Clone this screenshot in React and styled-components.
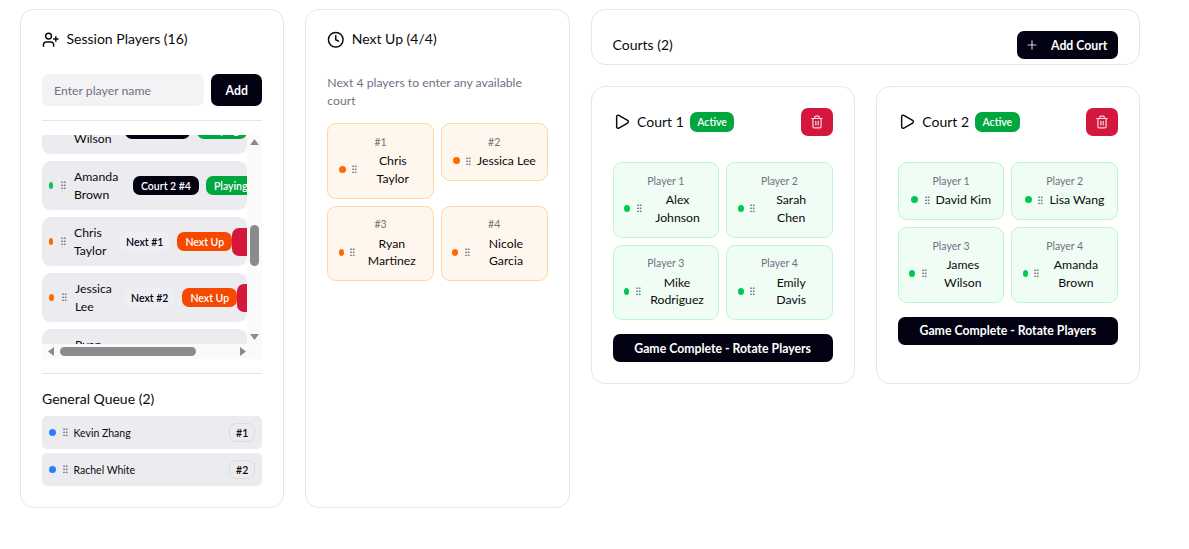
import React, { useLayoutEffect, useRef } from "react";
import styled, { createGlobalStyle } from "styled-components";
import { Clock, GripVertical, Play, Plus, Trash2, UserPlus, X } from "lucide-react";

const GlobalStyle = createGlobalStyle`
  html, body { margin: 0; padding: 0; background: #fff; }
  body {
    font-family: Lato, "Liberation Sans", sans-serif;
    font-size: 14px;
    color: #0a0a0a;
  }
  * { box-sizing: border-box; }
`;

const Page = styled.div`
  display: grid;
  grid-template-columns: repeat(4, minmax(0, 1fr));
  column-gap: 21px;
  width: 1120px;
  margin: 9px 0 0 20px;
`;

const Panel = styled.section`
  display: flex;
  flex-direction: column;
  min-width: 0;
  background: #fff;
  border: 1px solid #e6e6e6;
  border-radius: 14px;
  padding: 21px;
`;

const PanelTitle = styled.h2`
  display: flex;
  align-items: center;
  gap: 7px;
  height: 17.5px;
  margin: 0;
  font-size: 14px;
  font-weight: 400;
  line-height: 17.5px;
  svg { flex-shrink: 0; }
`;

const TitleText = styled.span`
  margin-bottom: 2px;
`;

const AddForm = styled.form`
  display: flex;
  gap: 7px;
  margin-top: 25.5px;
`;

const NameInput = styled.input`
  flex: 1;
  min-width: 0;
  height: 32px;
  padding: 0 12px;
  border: 0;
  border-radius: 7px;
  background: #f3f3f5;
  font: inherit;
  font-size: 12.25px;
  &::placeholder { color: #717182; opacity: 1; }
`;

const DarkButton = styled.button`
  display: flex;
  align-items: center;
  justify-content: center;
  border: 0;
  border-radius: 7px;
  background: #030213;
  color: #fff;
  font: inherit;
  font-size: 12.25px;
  font-weight: 700;
`;

const AddButton = styled(DarkButton)`
  width: 51px;
  height: 32px;
`;

const Separator = styled.hr`
  flex: 0 0 1px;
  width: 100%;
  height: 1px;
  margin: ${(p) => p.$margin};
  border: 0;
  background: #e5e5e5;
`;

const ListFrame = styled.div`
  display: grid;
  grid-template-columns: minmax(0, 1fr) 15px;
  grid-template-rows: 209px 15px;
  background: #fafafa;
`;

const PlayerList = styled.div`
  display: flex;
  flex-direction: column;
  gap: 7px;
  overflow: hidden;
  background: #fff;
`;

const VerticalBar = styled.div`
  display: flex;
  flex-direction: column;
`;

const HorizontalBar = styled.div`
  display: flex;
`;

const BarButton = styled.span`
  display: flex;
  flex: 0 0 ${(p) => p.$size}px;
  align-items: center;
  justify-content: ${(p) => p.$justify || "center"};
`;

const BarTrack = styled.div`
  display: flex;
  flex: 1;
  flex-direction: ${(p) => (p.$vertical ? "column" : "row")};
  align-items: center;
`;

const VerticalThumb = styled.div`
  width: 9px;
  height: 41px;
  margin-top: 75px;
  border-radius: 5px;
  background: #8b8b8b;
`;

const HorizontalThumb = styled.div`
  width: 136px;
  height: 9px;
  border-radius: 5px;
  background: #8b8b8b;
`;

const PlayerRow = styled.div`
  display: flex;
  flex: 0 0 49px;
  align-items: center;
  gap: 3.5px;
  width: 100%;
  height: 49px;
  padding: 7px;
  border-radius: 8.75px;
  background: #ececf0;
`;

const Dot = styled.span`
  flex: 0 0 ${(p) => p.$width || 7}px;
  height: 7px;
  border-radius: 50%;
  background: ${(p) => p.$color};
`;

const Grip = styled.span`
  display: flex;
  flex: 0 0 ${(p) => p.$box || 10.5}px;
  justify-content: center;
  color: #717182;
`;

const RowName = styled.span`
  flex: 0 0 ${(p) => p.$width}px;
  font-size: 12.25px;
  line-height: 17.5px;
  white-space: pre-line;
`;

const Badges = styled.div`
  display: flex;
  flex: 0 0 auto;
  align-items: center;
  gap: 7px;
`;

const Badge = styled.span`
  display: inline-flex;
  align-items: center;
  justify-content: center;
  flex: 0 0 auto;
  height: 19px;
  padding: 0 ${(p) => p.$pad || 8}px;
  border-radius: 7px;
  background: ${(p) => p.$bg};
  color: ${(p) => p.$color || "#fff"};
  font-size: 10.5px;
  font-weight: 600;
  line-height: 14px;
  white-space: nowrap;
`;

const RemoveButton = styled.button`
  display: flex;
  align-items: center;
  justify-content: center;
  flex: 0 0 40px;
  height: 28px;
  margin-left: -7px;
  padding: 0;
  border: 0;
  border-radius: 7px;
  background: #d4183d;
  color: #fff;
`;

const QueueTitle = styled.h3`
  margin: 0 0 7px;
  font-size: 14px;
  font-weight: 400;
  line-height: 21px;
`;

const QueueList = styled.div`
  display: flex;
  flex-direction: column;
  gap: 4px;
`;

const QueueRow = styled.div`
  display: flex;
  align-items: center;
  gap: 3.5px;
  height: 33px;
  padding: 0 7px;
  border-radius: 5px;
  background: #ececf0;
`;

const QueueName = styled.span`
  flex: 1;
  font-size: 10.5px;
`;

const QueueBadge = styled.span`
  padding: 1.75px 6px;
  border: 1px solid #dcdce0;
  border-radius: 7px;
  font-size: 10.5px;
  font-weight: 600;
  line-height: 14px;
`;

const Hint = styled.p`
  margin: 25.5px 0 14px;
  color: #717182;
  font-size: 12.25px;
  line-height: 17.5px;
`;

const CardGrid = styled.div`
  display: grid;
  grid-template-columns: repeat(2, minmax(0, 1fr));
  gap: 7px;
  align-items: ${(p) => p.$align || "stretch"};
`;

const Card = styled.div`
  padding: 10.5px;
  border: 1px solid ${(p) => p.$border};
  border-radius: 8.75px;
  background: ${(p) => p.$bg};
  text-align: center;
`;

const CardLabel = styled.div`
  margin-bottom: 3.5px;
  color: #717182;
  font-size: 10.5px;
  line-height: 14px;
`;

const CardPlayer = styled.div`
  display: flex;
  align-items: center;
  justify-content: center;
  gap: 3.5px;
`;

const CardName = styled.span`
  flex: ${(p) => (p.$wrapped ? "1" : "0 0 auto")};
  font-size: 12.25px;
  line-height: 17.5px;
  text-align: center;
  white-space: pre-line;
`;

const CourtsColumn = styled.div`
  grid-column: span 2;
  display: flex;
  flex-direction: column;
  align-self: start;
  gap: 21px;
  min-width: 0;
`;

const CourtsHeader = styled.div`
  display: flex;
  align-items: center;
  justify-content: space-between;
  padding: 21px 21px 5px;
  border: 1px solid #e6e6e6;
  border-radius: 14px;
`;

const AddCourtButton = styled(DarkButton)`
  justify-content: flex-start;
  gap: 12px;
  width: 101px;
  height: 28px;
  padding-left: 8px;
  svg { opacity: 0.8; }
`;

const CourtGrid = styled.div`
  display: grid;
  grid-template-columns: repeat(2, minmax(0, 1fr));
  gap: 21px;
`;

const CourtHead = styled.div`
  display: flex;
  align-items: center;
  margin-bottom: 26px;
`;

const CourtName = styled(PanelTitle)`
  flex: 1;
`;

const ActiveBadge = styled(Badge)`
  height: 20px;
  margin-left: -1px;
`;

const DeleteButton = styled.button`
  display: flex;
  align-items: center;
  justify-content: center;
  width: 32px;
  height: 28px;
  padding: 0;
  border: 0;
  border-radius: 7px;
  background: #d4183d;
  color: #fff;
  svg { opacity: 0.85; }
`;

const RotateButton = styled(DarkButton)`
  width: 100%;
  height: 28px;
  margin-top: 14px;
`;

const COLORS = { green: "#00c950", orange: "#ff6900", blue: "#2b7fff" };

const sessionPlayers = [
  { name: "Alex\nJohnson", court: "Court 1 #1" },
  { name: "Sarah\nChen", court: "Court 1 #2" },
  { name: "Mike\nRodriguez", court: "Court 1 #3" },
  { name: "Emily\nDavis", court: "Court 1 #4" },
  { name: "David\nKim", court: "Court 2 #1" },
  { name: "Lisa\nWang", court: "Court 2 #2" },
  { name: "James\nWilson", court: "Court 2 #3", nameWidth: 47 },
  { name: "Amanda\nBrown", court: "Court 2 #4", nameWidth: 55.5 },
  { name: "Chris\nTaylor", next: "Next #1", nameWidth: 41.5 },
  { name: "Jessica\nLee", next: "Next #2", nameWidth: 45.5, dot: 5 },
  { name: "Ryan\nMartinez", next: "Next #3", nameWidth: 56, dot: 5 },
  { name: "Nicole\nGarcia", next: "Next #4" },
  { name: "Kevin\nZhang" },
  { name: "Rachel\nWhite" },
  { name: "Tom\nAnderson" },
  { name: "Maria\nLopez" },
];

const nextUp = [
  { label: "#1", name: "Chris\nTaylor" },
  { label: "#2", name: "Jessica Lee" },
  { label: "#3", name: "Ryan\nMartinez", dot: 5, box: 8 },
  { label: "#4", name: "Nicole\nGarcia", dot: 6 },
];

const courts = [
  {
    name: "Court 1",
    players: [
      { name: "Alex\nJohnson", dot: 6 },
      { name: "Sarah\nChen", dot: 6 },
      { name: "Mike\nRodriguez", dot: 5, box: 8 },
      { name: "Emily\nDavis", dot: 6 },
    ],
  },
  {
    name: "Court 2",
    players: [
      { name: "David Kim" },
      { name: "Lisa Wang" },
      { name: "James\nWilson", dot: 6 },
      { name: "Amanda\nBrown", dot: 5, box: 8 },
    ],
  },
];

const GripIcon = ({ box }) => (
  <Grip $box={box}>
    <GripVertical size={10.5} strokeWidth={2} />
  </Grip>
);

const BarArrow = ({ points }) => (
  <svg width="9" height="9" viewBox="0 0 9 9">
    <polygon points={points} fill="#8b8b8b" />
  </svg>
);

const SessionRow = ({ player }) => {
  const { name, court, next, nameWidth = 46, dot = 4 } = player;
  const dotColor = court ? COLORS.green : next ? COLORS.orange : COLORS.blue;
  return (
    <PlayerRow>
      <Dot $color={dotColor} $width={dot} />
      <GripIcon box={14} />
      <RowName $width={nameWidth}>{name}</RowName>
      <Badges>
        {court && <Badge $bg="#030213">{court}</Badge>}
        {court && <Badge $bg="#00a63e">Playing</Badge>}
        {next && <Badge $bg="#eeeff3" $color="#030213" $pad={7}>{next}</Badge>}
        {next && <Badge $bg="#f54900">Next Up</Badge>}
        <RemoveButton type="button" aria-label="Remove">
          <X size={14} />
        </RemoveButton>
      </Badges>
    </PlayerRow>
  );
};

const PlayerCard = ({ label, name, color, bg, border, dot, box }) => (
  <Card $bg={bg} $border={border}>
    <CardLabel>{label}</CardLabel>
    <CardPlayer>
      <Dot $color={color} $width={dot} />
      <GripIcon box={box} />
      <CardName $wrapped={name.includes("\n")}>{name}</CardName>
    </CardPlayer>
  </Card>
);

const Court = ({ court }) => (
  <Panel>
    <CourtHead>
      <CourtName>
        <Play size={17.5} strokeWidth={2} />
        {court.name}
        <ActiveBadge $bg="#00a63e" $pad={7.5}>Active</ActiveBadge>
      </CourtName>
      <DeleteButton type="button" aria-label="Delete court">
        <Trash2 size={14} />
      </DeleteButton>
    </CourtHead>
    <CardGrid>
      {court.players.map((player, i) => (
        <PlayerCard
          key={player.name}
          {...player}
          label={`Player ${i + 1}`}
          color={COLORS.green}
          bg="#f0fdf4"
          border="#b9f8cf"
        />
      ))}
    </CardGrid>
    <RotateButton type="button">Game Complete - Rotate Players</RotateButton>
  </Panel>
);

export default function App() {
  const listRef = useRef(null);

  // the list in the picture is scrolled down to the later players
  useLayoutEffect(() => {
    listRef.current.scrollTop = 366;
  }, []);

  return (
    <Page>
      <GlobalStyle />
      <Panel>
        <PanelTitle>
          <UserPlus size={17.5} strokeWidth={2} />
          <TitleText>Session Players (16)</TitleText>
        </PanelTitle>
        <AddForm onSubmit={(e) => e.preventDefault()}>
          <NameInput placeholder="Enter player name" />
          <AddButton type="submit">Add</AddButton>
        </AddForm>
        <Separator $margin="14px 0" />
        <ListFrame>
          <PlayerList ref={listRef}>
            {sessionPlayers.map((player) => (
              <SessionRow key={player.name} player={player} />
            ))}
          </PlayerList>
          <VerticalBar>
            <BarButton $size={15}>
              <BarArrow points="0,7 9,7 4.5,1" />
            </BarButton>
            <BarTrack $vertical>
              <VerticalThumb />
            </BarTrack>
            <BarButton $size={15}>
              <BarArrow points="0,2 9,2 4.5,8" />
            </BarButton>
          </VerticalBar>
          <HorizontalBar>
            <BarButton $size={18}>
              <BarArrow points="7,0 7,9 1,4.5" />
            </BarButton>
            <BarTrack>
              <HorizontalThumb />
            </BarTrack>
            <BarButton $size={18} $justify="flex-end">
              <BarArrow points="2,0 2,9 8,4.5" />
            </BarButton>
          </HorizontalBar>
        </ListFrame>
        <Separator $margin="14px 0" />
        <QueueTitle>General Queue (2)</QueueTitle>
        <QueueList>
          <QueueRow>
            <Dot $color={COLORS.blue} />
            <GripIcon />
            <QueueName>Kevin Zhang</QueueName>
            <QueueBadge>#1</QueueBadge>
          </QueueRow>
          <QueueRow>
            <Dot $color={COLORS.blue} />
            <GripIcon />
            <QueueName>Rachel White</QueueName>
            <QueueBadge>#2</QueueBadge>
          </QueueRow>
        </QueueList>
      </Panel>

      <Panel>
        <PanelTitle>
          <Clock size={17.5} strokeWidth={2} />
          <TitleText>Next Up (4/4)</TitleText>
        </PanelTitle>
        <Hint>Next 4 players to enter any available court</Hint>
        <CardGrid $align="start">
          {nextUp.map((p) => (
            <PlayerCard
              key={p.label}
              {...p}
              color={COLORS.orange}
              bg="#fff7ed"
              border="#ffd6a8"
            />
          ))}
        </CardGrid>
      </Panel>

      <CourtsColumn>
        <CourtsHeader>
          <TitleText>Courts (2)</TitleText>
          <AddCourtButton type="button">
            <Plus size={14} />
            Add Court
          </AddCourtButton>
        </CourtsHeader>
        <CourtGrid>
          {courts.map((court) => (
            <Court key={court.name} court={court} />
          ))}
        </CourtGrid>
      </CourtsColumn>
    </Page>
  );
}
